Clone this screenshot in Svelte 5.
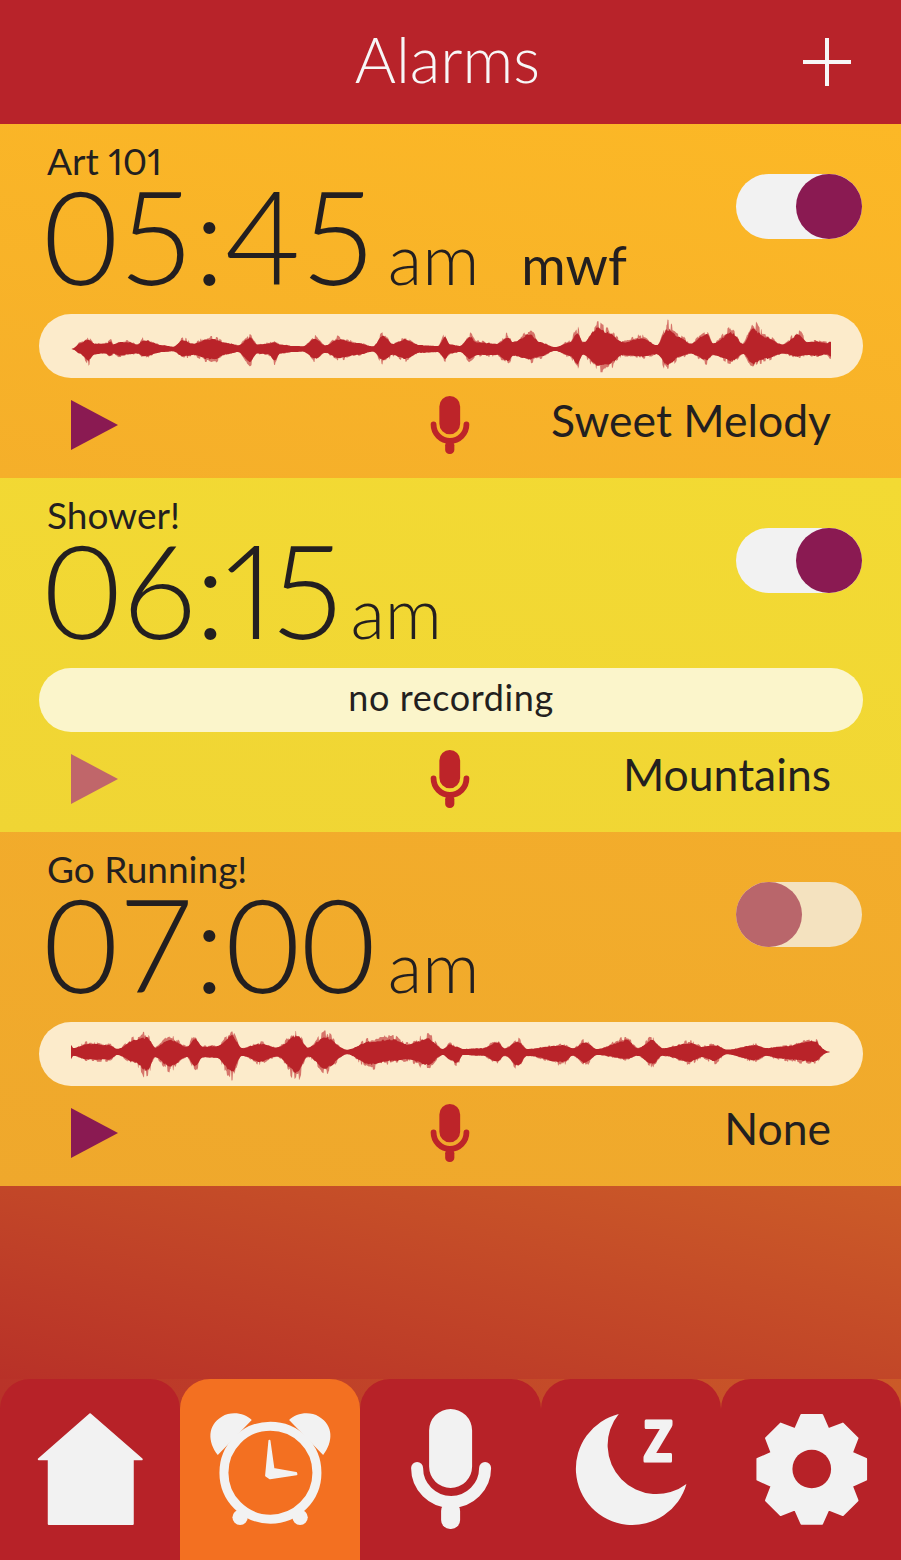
<script>
  const env1 = [[71,0,0],[80,6,4],[88,11,14],[95,5,5],[105,5,4],[111,8,7],[113,4,4],[120,7,7],[128,7,5],[138,4,4],[143,10,8],[163,3,2],[173,1,1],[183,10,8],[193,5,6],[207,11,11],[213,11,12],[227,6,5],[238,3,2],[250,13,15],[257,4,4],[268,5,5],[275,7,14],[280,4,4],[293,2,2],[303,1.5,1.5],[315,12,11],[325,3,3],[338,11,10],[357,6,6],[373,1.5,1.5],[383,16,13],[393,5,6],[405,11,11],[420,3,3],[438,2,2],[445,14,11],[450,4,4],[460,2,2],[470,14,11],[477,7,6],[497,5,6],[508,14,14],[513,7,7],[530,18,12],[540,7,8],[555,.5,.5],[570,7,7],[577,20,18],[583,7,6],[598,26,20],[607,20,20],[623,7,6],[642,13,8],[657,3,5],[667,25,20],[680,14,8],[690,5,4],[707,18,13],[713,6,6],[732,20,14],[743,5,5],[753,25,18],[765,14,11],[783,4,4],[798,17,8],[808,7,6],[817,8,7],[827,6,5],[830,8,8],[831,8,8]];
  const env3 = [[71,7,7],[73,3,3],[88,9,8],[110,7,8],[117,2,2],[135,14,12],[147,18,24],[155,4,5],[170,15,18],[187,5,5],[195,16,17],[203,5,5],[217,6,6],[232,20,25],[242,3,3],[260,9,11],[277,4,4],[297,20,26],[308,4,4],[325,18,20],[347,1,1],[370,12,15],[393,15,10],[407,8,8],[428,16,15],[443,2,2],[450,8,8],[457,5,13],[463,2,2],[483,3,3],[497,11,11],[505,3,3],[518,12,17],[527,2,3],[563,7,12],[573,3,3],[585,11,13],[597,2,2],[627,14,7],[638,3,3],[652,14,14],[663,3,3],[690,10,11],[702,5,5],[715,7,10],[727,1,1],[755,7,9],[767,3,3],[780,5,7],[788,6,8],[813,13,11],[831,0,0]];

  // Keyed envelope, smoothed between keys and roughened, so lobes read as a recorded waveform.
  function wave(env, cy, factor, floor, spread, seed) {
    let s = seed;
    const rnd = () => { s = (s * 16807) % 2147483647; return s / 2147483647; };
    const blunt = env === env3;
    const top = [], bottom = [];
    let i = 0, hold = 0, jagU = 1, jagD = 1;
    for (let x = 71; x <= 831; x += 0.5) {
      while (i < env.length - 2 && env[i + 1][0] < x) i++;
      const a = env[i], b = env[i + 1];
      const raw = Math.min(1, (x - a[0]) / (b[0] - a[0]));
      const t = raw * raw * (3 - 2 * raw);
      const u = a[1] + (b[1] - a[1]) * t, d = a[2] + (b[2] - a[2]) * t;
      if (hold-- <= 0) {
        hold = 1 + Math.floor(rnd() * 4);
        jagU = 1 - spread + spread * rnd();
        jagD = 1 - spread + spread * rnd();
      }
      const lead = blunt ? 1 : Math.min(1, (x - 71) / 8);
      const tail = blunt ? Math.min(1, (831 - x) / 14) : 1;
      const fade = Math.min(lead, tail);
      top.push(`${x} ${(cy - (u * factor * jagU + floor) * fade).toFixed(1)}`);
      bottom.unshift(`${x} ${(cy + (d * factor * jagD + floor) * fade).toFixed(1)}`);
    }
    return 'M' + top.join('L') + 'L' + bottom.join('L') + 'Z';
  }

  const gear = (() => {
    const pts = [];
    const cx = 1082, cy = 298;
    for (let n = 0; n < 8; n++) {
      const r = n * Math.PI / 4, c = Math.cos(r), sn = Math.sin(r);
      for (const [px, py] of [[-50, -120], [-31, -163], [31, -163], [50, -120]]) {
        pts.push(`${(cx + px * c - py * sn).toFixed(1)} ${(cy + px * sn + py * c).toFixed(1)}`);
      }
    }
    return 'M' + pts.join('L') + 'Z';
  })();

  const alarms = [
    { title: 'Art 101', time: '05:45', days: 'mwf', sound: 'Sweet Melody', on: true, tone: 'amber', wave: { outer: wave(env1, 35, 1.15, 0.8, 0.4, 77), inner: wave(env1, 35, 0.78, 1.6, 0.15, 991) } },
    { title: 'Shower!', time: '06:15', days: '', sound: 'Mountains', on: true, tone: 'yellow', wave: null },
    { title: 'Go Running!', time: '07:00', days: '', sound: 'None', on: false, tone: 'orange', wave: { outer: wave(env3, 30, 1.15, 0.8, 0.4, 313), inner: wave(env3, 30, 0.78, 1.6, 0.15, 4242) } }
  ];
</script>

{#snippet mic()}
  <path class="mic-body" d="M39.500 0a21.500 21.500 0 0 1 21.500 21.500v36a21.500 21.500 0 0 1-43 0v-36a21.500 21.500 0 0 1 21.500-21.500z" />
  <path class="mic-arc" d="M6 59a34 34 0 0 0 68 0" />
  <rect class="mic-body" x="30" y="93" width="19" height="27" rx="9" />
{/snippet}

<div class="app">
  <header class="top">
    <h1>Alarms</h1>
    <svg class="plus" viewBox="0 0 48 48" aria-hidden="true"><path d="M24 0v48M0 24h48" /></svg>
  </header>

  <main class="list">
    {#each alarms as a}
      <section class="card {a.tone}">
        <div class="head">
          <div class="when">
            <div class="title">{a.title}</div>
            <div class="clock" class:narrow={a.time.includes('1')}>
              <span class="time">{a.time}</span>
              <span class="ampm">am</span>
              {#if a.days}<span class="days">{a.days}</span>{/if}
            </div>
          </div>
          <div class="toggle" class:off={!a.on}><span class="knob"></span></div>
        </div>

        <div class="pill" class:empty={!a.wave}>
          {#if a.wave}
            <svg class="wave" viewBox="39 0 824 64" aria-hidden="true">
              <path class="wave-soft" d={a.wave.outer} />
              <path class="wave-solid" d={a.wave.inner} />
            </svg>
          {:else}
            <span class="none">no recording</span>
          {/if}
        </div>

        <div class="controls">
          <svg class="play" class:muted={!a.wave} viewBox="0 0 47 50" aria-hidden="true"><path d="M0 0L47 25L0 50Z" /></svg>
          <svg class="rowmic" viewBox="0 0 80 120" aria-hidden="true">{@render mic()}</svg>
          <div class="sound">{a.sound}</div>
        </div>
      </section>
    {/each}
    <div class="filler"></div>
  </main>

  <nav class="tabs">
    <div class="tab">
      <svg viewBox="0 27 540 543" aria-hidden="true">
        <path class="ico round" d="M270 133L425 268H398V462H146V268H116Z" />
      </svg>
    </div>
    <div class="tab active">
      <svg viewBox="540 27 540 543" aria-hidden="true">
        <path class="ico" d="M653 255C622 215 622 165 665 140C695 122 735 130 755 150Z" />
        <path class="ico" d="M969 255C1000 215 1000 165 957 140C927 122 887 130 867 150Z" />
        <circle class="ring" cx="811" cy="308" r="139.500" />
        <circle class="ico" cx="720" cy="442" r="23" />
        <circle class="ico" cx="900" cy="442" r="23" />
        <path class="ico round-sm" d="M808 212L820 297L888 309L889 313L810 325L798 317Z" />
      </svg>
    </div>
    <div class="tab">
      <svg viewBox="1080 27 540 543" aria-hidden="true">
        <g transform="translate(1233 117) scale(3)">{@render mic()}</g>
      </svg>
    </div>
    <div class="tab">
      <svg viewBox="270 27 540 543" aria-hidden="true">
        <path class="ico" d="M503 132A169 169 0 1 0 706 342A147 147 0 0 1 503 132Z" />
        <text class="zed" x="621" y="272" text-anchor="middle" textLength="85" lengthAdjust="spacingAndGlyphs">Z</text>
      </svg>
    </div>
    <div class="tab">
      <svg viewBox="810 27 540 543" aria-hidden="true">
        <path class="ico round" d={gear} />
        <circle class="hole" cx="1082" cy="297" r="58" />
      </svg>
    </div>
  </nav>
</div>

<style>
  :global(body) { margin: 0; background: #b8232a; }
  .app {
    width: 901px;
    height: 1560px;
    display: flex;
    flex-direction: column;
    overflow: hidden;
    font-family: Lato, "Noto Sans", sans-serif;
    font-variant-numeric: proportional-nums;
    color: #231f20;
  }
  .top {
    height: 124px;
    flex: none;
    background: #b8232a;
    display: flex;
    align-items: center;
    justify-content: center;
    position: relative;
  }
  h1 {
    margin: 0 6px 8px 0;
    font-size: 63px;
    font-weight: 300;
    line-height: 1;
    color: #f7f7f7;
  }
  .plus {
    position: absolute;
    left: 803px;
    top: 38px;
    width: 48px;
    height: 48px;
  }
  .plus path { stroke: #f7f7f7; stroke-width: 4; fill: none; }
  .list {
    flex: 1;
    display: flex;
    flex-direction: column;
    min-height: 0;
  }
  .card {
    height: 354px;
    flex: none;
    box-sizing: border-box;
    padding: 17px 39px 0 39px;
  }
  .amber { background: linear-gradient(190deg, #fcb826, #f5af2a); }
  .yellow { background: linear-gradient(190deg, #f3da33, #f0d534); }
  .orange { background: linear-gradient(190deg, #f3ad2b, #efa82c); }
  .head {
    height: 173px;
    display: flex;
    justify-content: space-between;
  }
  .title {
    margin-left: 8px;
    font-size: 37px;
    line-height: 40px;
  }
  .clock {
    margin: -1px 0 0 4px;
    display: flex;
    align-items: baseline;
    line-height: 110px;
    white-space: nowrap;
    font-variant-numeric: tabular-nums;
  }
  .clock.narrow {
    margin-left: 1px;
    font-variant-numeric: proportional-nums;
  }
  .clock.narrow .time { letter-spacing: -1px; }
  .clock.narrow .ampm { margin-left: 9px; }
  .time { font-size: 130px; font-weight: 300; }
  .ampm { margin-left: 12px; font-size: 71px; font-weight: 300; }
  .days { margin-left: 42px; font-size: 54px; font-weight: 400; }
  .toggle {
    margin-top: 33px;
    width: 126px;
    height: 65px;
    border-radius: 33px;
    background: #f2f2f2;
    display: flex;
    justify-content: flex-end;
  }
  .knob {
    width: 66px;
    height: 65px;
    border-radius: 50%;
    background: #8a1a52;
  }
  .toggle.off { background: #f4e2bf; justify-content: flex-start; }
  .toggle.off .knob { background: #b9666b; }
  .pill {
    height: 64px;
    margin-right: -1px;
    border-radius: 32px;
    background: #fcebcb;
    display: flex;
    align-items: center;
    justify-content: center;
  }
  .none {
    font-size: 36px;
    letter-spacing: 0.6px;
    line-height: 40px;
    margin-bottom: 6px;
  }
  .pill.empty { background: #fbf5cb; }
  .wave { display: block; width: 100%; height: 64px; }
  .wave-soft { fill: #bd2429; opacity: 0.6; }
  .wave-solid { fill: #b92329; }
  .controls {
    margin-top: 18px;
    padding: 0 31px 0 32px;
    height: 58px;
    display: grid;
    grid-template-columns: 1fr 40px 1fr;
    align-items: center;
  }
  .play { width: 47px; height: 50px; }
  .play path { fill: #8a1a52; }
  .play.muted path { fill: #c0666a; }
  .rowmic { width: 40px; height: 58px; display: block; margin-left: -1px; }
  .sound {
    text-align: right;
    font-size: 44.500px;
    line-height: 58px;
    white-space: nowrap;
    margin-top: -10px;
  }
  .mic-body { fill: #bd2429; }
  .mic-arc { fill: none; stroke: #bd2429; stroke-width: 12; stroke-linecap: round; }
  .filler {
    flex: 1;
    background: linear-gradient(to top right, #b83128, #cc5c28);
  }
  .tabs {
    height: 181px;
    flex: none;
    display: grid;
    grid-template-columns: repeat(5, 1fr);
    background: linear-gradient(to right, #b93329, #cb5a28);
  }
  .tab {
    height: 181px;
    background: #b72228;
    border-radius: 30px 30px 0 0;
  }
  .tab svg { display: block; width: 100%; height: 181px; }
  .tab .mic-body { fill: #f2f2f2; }
  .tab .mic-arc { stroke: #f2f2f2; }
  .active { background: #f37021; }
  .ico { fill: #f2f2f2; }
  .round { stroke: #f2f2f2; stroke-width: 6; stroke-linejoin: round; }
  .round-sm { stroke: #f2f2f2; stroke-width: 6; stroke-linejoin: round; }
  .ring { fill: none; stroke: #f2f2f2; stroke-width: 27; }
  .hole { fill: #b72228; }
  .zed {
    fill: #f2f2f2;
    stroke: #f2f2f2;
    stroke-width: 9;
    stroke-linejoin: round;
    font-family: Lato, sans-serif;
    font-weight: 900;
    font-size: 165px;
  }
</style>
